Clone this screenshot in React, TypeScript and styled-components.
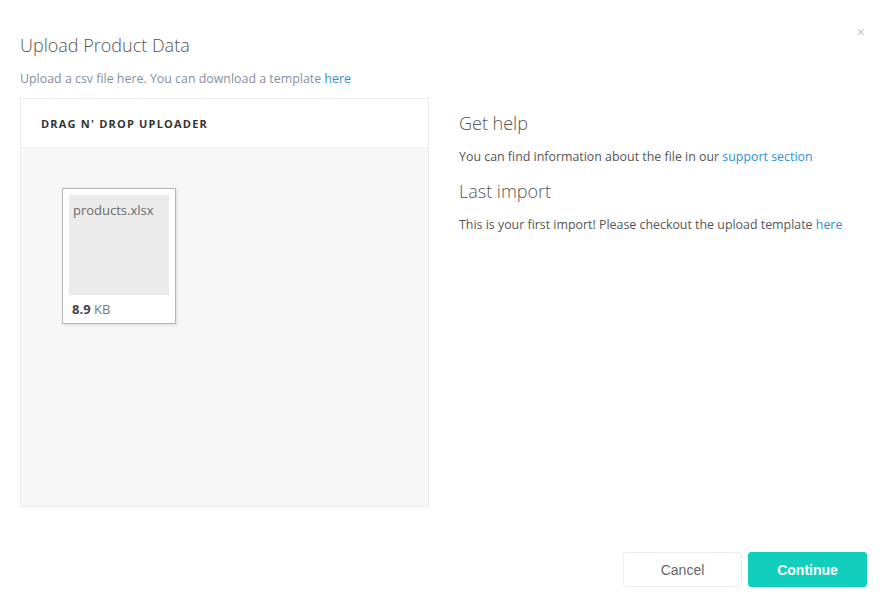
import React from "react";
import styled, { createGlobalStyle } from "styled-components";

const Global = createGlobalStyle`
  html, body { margin: 0; padding: 0; background: #fff; }
  body { font-family: "Open Sans", "Noto Sans", sans-serif; color: #555; }
  * { box-sizing: border-box; }
`;

const Modal = styled.div`
  position: relative;
  width: 882px;
  height: 611px;
  padding: 33px 20px 0 20px;
  display: flex;
  flex-direction: column;
`;

const Close = styled.button`
  position: absolute;
  top: 24px;
  right: 17px;
  border: none;
  background: none;
  padding: 0;
  color: #c8c8c8;
  font-family: "Liberation Sans", Arial, sans-serif;
  font-size: 14px;
  line-height: 16px;
  cursor: pointer;
`;

const Title = styled.h2`
  margin: 0;
  font-size: 18px;
  font-weight: 300;
  color: #555;
  line-height: 25px;
`;

const Subtitle = styled.p`
  margin: 12px 0 10px;
  font-size: 12.4px;
  line-height: 18px;
  color: #8590a2;
`;

const Link = styled.a`
  color: #2f8fd3;
  text-decoration: none;
`;

const Columns = styled.div`
  display: flex;
  gap: 30px;
`;

const Panel = styled.div`
  width: 409px;
  height: 409px;
  border: 1px solid #ebebeb;
  display: flex;
  flex-direction: column;
  background: #fff;
`;

const PanelHeader = styled.div`
  height: 49px;
  display: flex;
  align-items: center;
  padding: 0 20px;
  font-size: 11px;
  font-weight: 700;
  letter-spacing: 1.2px;
  color: #333;
  text-transform: uppercase;
  border-bottom: 1px solid #f0f0f0;
`;

const DropArea = styled.div`
  flex: 1;
  background: #f7f7f7;
  padding: 40px 41px;
  display: flex;
  align-items: flex-start;
`;

const FileCard = styled.div`
  width: 114px;
  border: 1px solid #b5b5b5;
  background: #fff;
  padding: 6px 6px 5px;
  box-shadow: 1px 1px 3px rgba(0, 0, 0, 0.12);
`;

const Preview = styled.div`
  height: 100px;
  background: #ebebeb;
  padding: 7px 4px;
  font-size: 13px;
  color: #6a6a6a;
  line-height: 17px;
`;

const Size = styled.div`
  margin-top: 6px;
  padding-left: 3px;
  font-size: 13px;
  color: #777;
  line-height: 17px;
  strong { color: #444; font-weight: 700; }
`;

const Side = styled.div`
  padding-top: 13px;
  display: flex;
  flex-direction: column;
`;

const SideTitle = styled.h3`
  margin: 0;
  font-size: 18px;
  font-weight: 300;
  color: #555;
  line-height: 24px;
`;

const SideText = styled.p`
  margin: 13px 0 13px;
  font-size: 12.4px;
  line-height: 18px;
  color: #555;
`;

const Footer = styled.div`
  margin-top: auto;
  display: flex;
  justify-content: flex-end;
  gap: 6px;
  padding-bottom: 24px;
  margin-right: -5px;
`;

const Button = styled.button<{ $primary?: boolean }>`
  width: 119px;
  height: 35px;
  border-radius: 3px;
  font-family: "Liberation Sans", Arial, sans-serif;
  font-size: 14px;
  font-weight: ${(p) => (p.$primary ? 700 : 400)};
  border: 1px solid ${(p) => (p.$primary ? "#12cfbd" : "#ececec")};
  background: ${(p) => (p.$primary ? "#12cfbd" : "#fff")};
  color: ${(p) => (p.$primary ? "#fff" : "#666")};
  cursor: pointer;
`;

export default function App() {
  return (
    <>
      <Global />
      <Modal>
        <Close aria-label="close">×</Close>
        <Title>Upload Product Data</Title>
        <Subtitle>
          Upload a csv file here. You can download a template <Link href="#">here</Link>
        </Subtitle>
        <Columns>
          <Panel>
            <PanelHeader>Drag n' drop uploader</PanelHeader>
            <DropArea>
              <FileCard>
                <Preview>products.xlsx</Preview>
                <Size>
                  <strong>8.9</strong> KB
                </Size>
              </FileCard>
            </DropArea>
          </Panel>
          <Side>
            <SideTitle>Get help</SideTitle>
            <SideText>
              You can find information about the file in our <Link href="#">support section</Link>
            </SideText>
            <SideTitle>Last import</SideTitle>
            <SideText>
              This is your first import! Please checkout the upload template <Link href="#">here</Link>
            </SideText>
          </Side>
        </Columns>
        <Footer>
          <Button>Cancel</Button>
          <Button $primary>Continue</Button>
        </Footer>
      </Modal>
    </>
  );
}
